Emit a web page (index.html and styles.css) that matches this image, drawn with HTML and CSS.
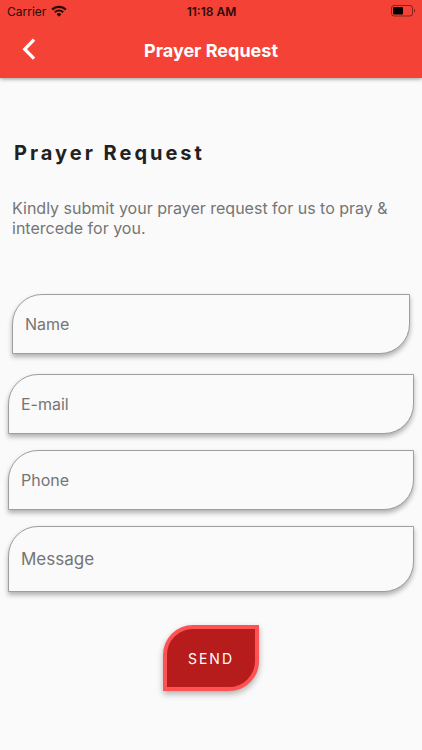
FILE: index.html
```html
<!DOCTYPE html>
<html lang="en">

<head>
    <meta charset="UTF-8">
    <meta name="viewport" content="width=device-width, initial-scale=1.0">
    <title>Prayer Request</title>
    <link rel="stylesheet" href="styles.css">
</head>

<body>
    <header class="app-bar">
        <div class="status-bar">
            <div class="carrier">
                <span>Carrier</span>
                <svg class="wifi" viewBox="0 0 16 12" aria-hidden="true">
                    <path d="M1.2 4.6a9.6 9.6 0 0 1 13.6 0" fill="none" stroke="currentColor" stroke-width="2.3" />
                    <path d="M3.8 7.3a5.9 5.9 0 0 1 8.4 0" fill="none" stroke="currentColor" stroke-width="2" />
                    <path d="M8 11.7 5.6 9.2a3.4 3.4 0 0 1 4.8 0z" fill="currentColor" />
                </svg>
            </div>
            <span class="clock">11:18 AM</span>
            <svg class="battery" viewBox="0 0 25 12" aria-hidden="true">
                <rect x="0.5" y="0.5" width="21" height="10.5" rx="2.5" fill="none" stroke="#000" stroke-opacity="0.45" />
                <rect x="2" y="2" width="10" height="7.5" rx="1.2" fill="#000" />
                <path d="M23 4v3.6c1.6-.6 1.6-3 0-3.6z" fill="#000" fill-opacity="0.5" />
            </svg>
        </div>
        <div class="toolbar">
            <button type="button" class="back" aria-label="Back">
                <svg viewBox="0 0 24 24" aria-hidden="true">
                    <path d="M17.6 2.4 9 11.2l8.6 8.8" fill="none" stroke="#fff" stroke-width="3" />
                </svg>
            </button>
            <h1 class="title">Prayer Request</h1>
        </div>
    </header>

    <main class="content">
        <h2 class="heading">Prayer Request</h2>
        <p class="intro">Kindly submit your prayer request for us to pray &amp; intercede for you.</p>

        <form class="request-form">
            <input class="field field-name" type="text" name="name" placeholder="Name" aria-label="Name">
            <input class="field" type="email" name="email" placeholder="E-mail" aria-label="E-mail">
            <input class="field" type="tel" name="phone" placeholder="Phone" aria-label="Phone">
            <textarea class="field field-message" name="message" rows="1" placeholder="Message" aria-label="Message"></textarea>
            <button type="submit" class="send">SEND</button>
        </form>
    </main>
</body>

</html>
```
FILE: styles.css
```css
body {
    margin: 0;
    min-height: 100vh;
    background-color: #fafafa;
    font-family: Inter, sans-serif;
}

.app-bar {
    background-color: #f44336;
    box-shadow: 0 1px 4px rgba(0, 0, 0, 0.4);
}

.status-bar {
    display: grid;
    grid-template-columns: 1fr auto 1fr;
    align-items: center;
    height: 22px;
    padding: 0 6px 0 7px;
    color: #2a0b09;
    font-size: 12px;
}

.carrier {
    display: flex;
    align-items: center;
    gap: 5px;
}

.wifi {
    width: 16px;
    height: 12px;
}

.clock {
    font-weight: 600;
}

.battery {
    width: 25px;
    height: 12px;
    justify-self: end;
}

.toolbar {
    display: grid;
    grid-template-columns: 56px 1fr 56px;
    align-items: center;
    height: 56px;
}

.back {
    display: flex;
    justify-content: center;
    padding: 0;
    border: none;
    background: none;
    cursor: pointer;
}

.back svg {
    width: 26px;
    height: 26px;
}

.title {
    margin: 0;
    color: #fff;
    font-size: 18px;
    font-weight: 700;
    text-align: center;
}

.content {
    padding: 63px 8px 24px;
}

.heading {
    margin: 0 6px;
    color: #212121;
    font-size: 20px;
    line-height: 24px;
    font-weight: 700;
    letter-spacing: 3px;
}

.intro {
    margin: 33px 4px 56px;
    color: #757575;
    font-size: 16px;
    line-height: 20px;
}

.request-form {
    display: flex;
    flex-direction: column;
    gap: 16px;
}

.field {
    box-sizing: border-box;
    height: 60px;
    padding: 0 12px;
    border: 1px solid #9e9e9e;
    border-radius: 30px 0;
    background-color: #fafafa;
    box-shadow: 0 3px 5px rgba(0, 0, 0, 0.3);
    color: #212121;
    font-family: Inter, sans-serif;
    font-size: 16px;
    outline: none;
}

.field::placeholder {
    color: #757575;
    opacity: 1;
}

.field-name {
    margin: 0 4px 4px;
}

.field-message {
    height: 66px;
    padding: 22px 12px;
    font-size: 17px;
    line-height: 20px;
    overflow: hidden;
    resize: none;
}

.send {
    align-self: center;
    box-sizing: border-box;
    width: 96px;
    height: 66px;
    margin-top: 17px;
    padding: 0;
    border: 4px solid #ff5252;
    border-radius: 30px 0;
    background-color: #b71c1c;
    box-shadow: 0 3px 6px rgba(0, 0, 0, 0.3);
    color: #fff;
    font-family: Inter, sans-serif;
    font-size: 14px;
    letter-spacing: 2px;
    cursor: pointer;
}
```
